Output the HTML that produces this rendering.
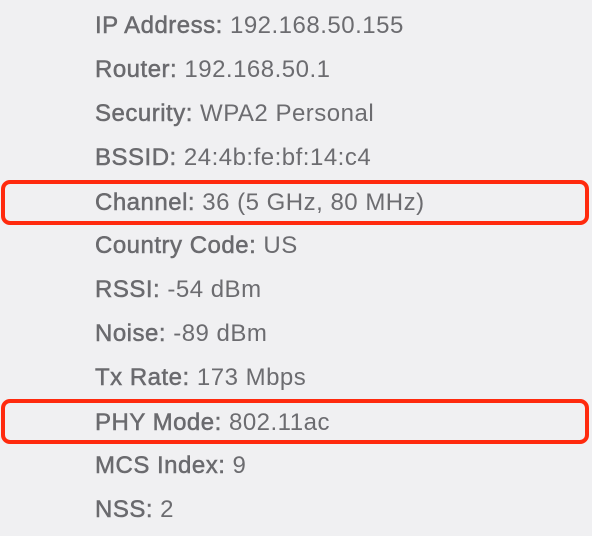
<!DOCTYPE html>
<html><head><style>
html,body{margin:0;padding:0;}
body{width:592px;height:536px;background:#f0f0f2;position:relative;overflow:hidden;font-family:"Liberation Sans",Arial,sans-serif;}
.r{position:absolute;left:95px;font-size:24px;letter-spacing:0.5px;color:#6c6c70;line-height:26px;white-space:nowrap;}
.r b{font-weight:normal;-webkit-text-stroke:0.5px #6a6a6e;color:#6a6a6e;}
.box{position:absolute;left:1px;width:580px;height:37px;border:4px solid #ff2a0e;border-radius:9px;}
</style></head><body>
<div class="r" style="top:13px"><b>IP Address:</b> 192.168.50.155</div>
<div class="r" style="top:57px"><b>Router:</b> 192.168.50.1</div>
<div class="r" style="top:101px"><b>Security:</b> WPA2 Personal</div>
<div class="r" style="top:145px"><b>BSSID:</b> 24:4b:fe:bf:14:c4</div>
<div class="r" style="top:190px"><b>Channel:</b> 36 (5 GHz, 80 MHz)</div>
<div class="r" style="top:233px"><b>Country Code:</b> US</div>
<div class="r" style="top:277px"><b>RSSI:</b> -54 dBm</div>
<div class="r" style="top:321px"><b>Noise:</b> -89 dBm</div>
<div class="r" style="top:365px"><b>Tx Rate:</b> 173 Mbps</div>
<div class="r" style="top:410px"><b>PHY Mode:</b> 802.11ac</div>
<div class="r" style="top:453px"><b>MCS Index:</b> 9</div>
<div class="r" style="top:497px"><b>NSS:</b> 2</div>
<div class="box" style="top:180px"></div>
<div class="box" style="top:399px"></div>
</body></html>
